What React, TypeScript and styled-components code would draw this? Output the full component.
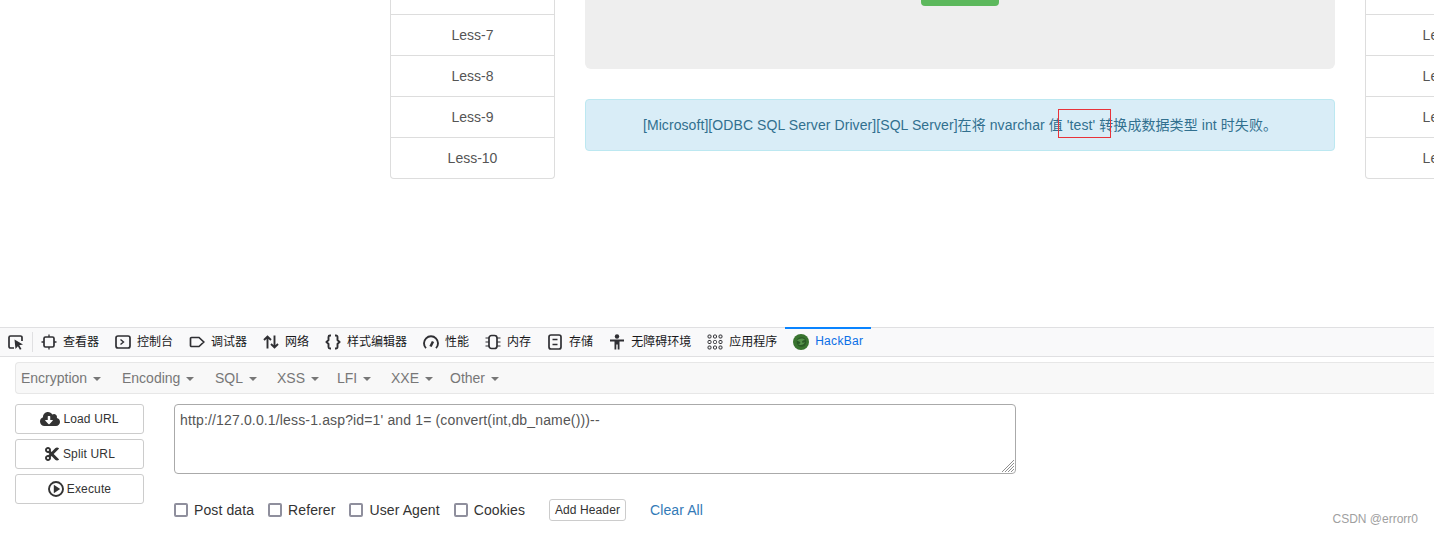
import React from "react";
import styled, { createGlobalStyle } from "styled-components";
import { FaCloudDownloadAlt, FaCut } from "react-icons/fa";

const Global = createGlobalStyle`
  html, body { margin: 0; padding: 0; background: #fff; }
  body { font-family: "Liberation Sans", "Noto Sans CJK SC", sans-serif; overflow: hidden; }
`;

const Page = styled.div`
  width: 1434px;
  height: 533px;
  overflow: hidden;
  position: relative;
  display: flex;
  flex-direction: column;
`;

const Site = styled.div`
  height: 327px;
  padding-left: 390px;
  display: grid;
  grid-template-columns: 165px 750px 165px;
  column-gap: 30px;
  align-items: start;
`;

const LessList = styled.ul`
  list-style: none;
  margin: 0;
  padding: 0;
  border: 1px solid #ddd;
  border-top: 0;
  border-radius: 0 0 4px 4px;
  background: #fff;
`;

const LessItem = styled.li<{ $stub?: boolean }>`
  height: ${(p) => (p.$stub ? "14px" : "40px")};
  border-top: ${(p) => (p.$stub ? "0" : "1px solid #ddd")};
  display: flex;
  align-items: center;
  justify-content: center;
  font-size: 14px;
  color: #555;
`;

const Main = styled.div`
  display: flex;
  flex-direction: column;
  gap: 30px;
`;

const Jumbotron = styled.div`
  height: 69px;
  background: #eee;
  border-radius: 0 0 6px 6px;
  display: flex;
  justify-content: center;
`;

const GreenButton = styled.div`
  width: 78px;
  height: 6px;
  background: #5cb85c;
  border-radius: 0 0 4px 4px;
`;

const Alert = styled.div`
  position: relative;
  height: 52px;
  box-sizing: border-box;
  border: 1px solid #bce8f1;
  border-radius: 4px;
  background: #d9edf7;
  color: #31708f;
  font-size: 14px;
  letter-spacing: 0.08px;
  padding-bottom: 2px;
  display: flex;
  align-items: center;
  justify-content: center;
  white-space: pre;
`;

const RedBox = styled.div`
  position: absolute;
  left: 472px;
  top: 9px;
  width: 53px;
  height: 29px;
  box-sizing: border-box;
  border: 1px solid #e8333a;
`;

const Toolbar = styled.div`
  height: 28px;
  border-top: 1px solid #e0e0e2;
  border-bottom: 1px solid #e0e0e2;
  background: #f9f9fa;
  display: flex;
  align-items: stretch;
`;

const PickerCell = styled.div`
  width: 33px;
  box-sizing: border-box;
  padding-left: 8px;
  display: flex;
  align-items: center;
  border-right: 1px solid #e0e0e2;
  margin: 4px 0;
`;

const Tab = styled.div<{ $active?: boolean }>`
  display: flex;
  align-items: center;
  gap: 6px;
  padding: 0 8px 1px;
  font-size: 12px;
  color: ${(p) => (p.$active ? "#0b6fe6" : "#18181a")};
  margin-top: ${(p) => (p.$active ? "-1px" : "0")};
  border-top: ${(p) => (p.$active ? "2px solid #0a84ff" : "0")};
  white-space: nowrap;
`;

const TabLabel = styled.span<{ $latin?: boolean }>`
  font-family: ${(p) => (p.$latin ? '"Liberation Sans", sans-serif' : '"Noto Sans CJK SC", sans-serif')};
  letter-spacing: ${(p) => (p.$latin ? "0.3px" : "0")};
  position: relative;
  top: -1px;
`;

const Glyph = styled.svg`
  width: 16px;
  height: 16px;
  flex: none;
  fill: none;
  stroke: #2f2f33;
  stroke-width: 1.7;
`;

const HackBar = styled.div`
  padding: 5px 0 0 15px;
  display: flex;
  flex-direction: column;
  gap: 10px;
`;

const MenuBar = styled.nav`
  height: 32px;
  box-sizing: border-box;
  background: #f8f8f8;
  border: 1px solid #e7e7e7;
  border-right: 0;
  border-radius: 4px 0 0 4px;
  display: flex;
  align-items: center;
  padding-left: 5px;
`;

const MenuItem = styled.span<{ $width: number }>`
  width: ${(p) => p.$width}px;
  flex: none;
  font-size: 14px;
  color: #777;
  display: flex;
  align-items: center;
  gap: 6px;
`;

const Caret = styled.i`
  width: 0;
  height: 0;
  border-top: 4px solid #777;
  border-left: 4px solid transparent;
  border-right: 4px solid transparent;
  margin-top: 2px;
`;

const Body = styled.div`
  display: grid;
  grid-template-columns: 129px 842px;
  column-gap: 30px;
  align-items: start;
`;

const SideButtons = styled.div`
  display: flex;
  flex-direction: column;
  gap: 5px;
`;

const SideButton = styled.button`
  height: 30px;
  padding: 0;
  background: #fff;
  border: 1px solid #ccc;
  border-radius: 3px;
  color: #333;
  font: 12px "Liberation Sans", sans-serif;
  letter-spacing: 0.15px;
  display: flex;
  align-items: center;
  justify-content: center;
  gap: 3px;
  svg { flex: none; color: #333; }
`;

const Editor = styled.div`
  display: flex;
  flex-direction: column;
  gap: 25px;
`;

const UrlWrap = styled.div`
  position: relative;
  height: 70px;
`;

const UrlField = styled.textarea`
  display: block;
  width: 100%;
  height: 100%;
  box-sizing: border-box;
  margin: 0;
  padding: 7px 5px;
  border: 1px solid #aaa;
  border-radius: 4px;
  resize: none;
  outline: 0;
  color: #555;
  background: #fff;
  font: 14px/1.15 "Liberation Sans", sans-serif;
  letter-spacing: 0.15px;
`;

const Grip = styled.svg`
  position: absolute;
  right: 1px;
  bottom: 1px;
  width: 15px;
  height: 15px;
  stroke: #8f8f8f;
  stroke-width: 1;
  fill: none;
`;

const Options = styled.div`
  height: 22px;
  display: flex;
  align-items: center;
`;

const Check = styled.label`
  display: flex;
  align-items: center;
  gap: 6px;
  margin-right: 14px;
  font-size: 14px;
  letter-spacing: 0.1px;
  color: #333;
`;

const Box = styled.span`
  width: 14px;
  height: 14px;
  box-sizing: border-box;
  border: 2px solid #8f8f9d;
  border-radius: 2px;
  background: #fff;
`;

const AddHeader = styled.button`
  width: 77px;
  height: 22px;
  padding: 0;
  margin-left: 10px;
  background: #fff;
  border: 1px solid #ccc;
  border-radius: 3px;
  color: #333;
  font: 12px "Liberation Sans", sans-serif;
  letter-spacing: 0.1px;
`;

const ClearAll = styled.a`
  margin-left: 24px;
  font-size: 14px;
  letter-spacing: 0.1px;
  color: #337ab7;
`;

const Watermark = styled.div`
  position: absolute;
  right: 16px;
  top: 512px;
  font-size: 12px;
  line-height: 14px;
  color: #a0a0a0;
`;

const List = ({ items }: { items: string[] }) => (
  <LessList>
    <LessItem $stub />
    {items.map((l) => (
      <LessItem key={l}>{l}</LessItem>
    ))}
  </LessList>
);

const tabs: { label: string; icon: React.ReactNode }[] = [
  {
    label: "查看器",
    icon: (
      <>
        <rect x="3" y="3" width="10" height="10" rx="1.5" />
        <path d="M8 0.5V3M8 13v2.5M0.5 8H3M13 8h2.5" strokeWidth="1.3" />
      </>
    ),
  },
  {
    label: "控制台",
    icon: (
      <>
        <rect x="1" y="2" width="14" height="12" rx="2" />
        <path d="M5.5 5.5 8.5 8l-3 2.5" strokeWidth="1.4" />
      </>
    ),
  },
  {
    label: "调试器",
    icon: <path d="M2.5 3.5h7.5L14.8 8 10 12.5H2.5a1 1 0 0 1-1-1v-7a1 1 0 0 1 1-1z" />,
  },
  {
    label: "网络",
    icon: <path d="M4.5 14.5V2.5M1 6l3.500-3.500L8 6M11.500 1.500v12M8 10l3.500 3.500L15 10" strokeWidth="1.9" />,
  },
  {
    label: "样式编辑器",
    icon: (
      <path
        d="M6 1.500H5a1.500 1.500 0 0 0-1.500 1.500v3L1.500 8l2 2v3A1.500 1.500 0 0 0 5 14.500h1M10 1.500h1A1.500 1.500 0 0 1 12.500 3v3l2 2-2 2v3a1.500 1.500 0 0 1-1.500 1.500h-1"
        strokeWidth="1.9"
      />
    ),
  },
  {
    label: "性能",
    icon: (
      <>
        <path d="M3 14.200A7 7 0 1 1 13 14.200" strokeWidth="1.900" />
        <path d="M7.500 12.500 10 7.500" strokeWidth="2.500" />
      </>
    ),
  },
  {
    label: "内存",
    icon: (
      <>
        <rect x="4" y="1.500" width="8" height="13" rx="2.500" />
        <path d="M0.500 4H4M0.500 8H4M0.500 12H4M12 4h3.500M12 8h3.500M12 12h3.500" strokeWidth="1.100" />
      </>
    ),
  },
  {
    label: "存储",
    icon: (
      <>
        <rect x="2" y="1" width="12" height="14" rx="2" />
        <path d="M5.500 5.500h5M5.500 10.500h5" />
      </>
    ),
  },
  {
    label: "无障碍环境",
    icon: (
      <>
        <circle cx="8" cy="2.500" r="2.200" fill="#2f2f33" stroke="none" />
        <path d="M1 5.500h14v2h-4.500V15.500H8.700v-5H7.300v5H5.500V7.500H1z" fill="#2f2f33" stroke="none" />
      </>
    ),
  },
  {
    label: "应用程序",
    icon: (
      <g strokeWidth="1">
        {[2.5, 8, 13.5].flatMap((y) =>
          [2.5, 8, 13.5].map((x) => <rect key={`${x}-${y}`} x={x - 1.5} y={y - 1.5} width="3" height="3" rx="1" />)
        )}
      </g>
    ),
  },
];

const menus: [string, number][] = [
  ["Encryption", 101],
  ["Encoding", 93],
  ["SQL", 62],
  ["XSS", 60],
  ["LFI", 54],
  ["XXE", 59],
  ["Other", 60],
];
const checks = ["Post data", "Referer", "User Agent", "Cookies"];

export default function App() {
  return (
    <Page>
      <Global />
      <Site>
        <List items={["Less-7", "Less-8", "Less-9", "Less-10"]} />
        <Main>
          <Jumbotron>
            <GreenButton />
          </Jumbotron>
          <Alert>
            [Microsoft][ODBC SQL Server Driver][SQL Server]在将 nvarchar 值 'test' 转换成数据类型 int 时失败。
            <RedBox />
          </Alert>
        </Main>
        <List items={["Less-17", "Less-18", "Less-19", "Less-20"]} />
      </Site>

      <Toolbar>
        <PickerCell>
          <Glyph viewBox="0 0 16 16">
            <path d="M6 14H2.500A1.500 1.500 0 0 1 1 12.500v-9A1.500 1.500 0 0 1 2.500 2h10A1.500 1.500 0 0 1 14 3.500V7" />
            <path d="M6.500 5.500 15 10.500l-3.700.8L13.500 15l-1.600.8-2-3.600L7.500 15z" fill="#2f2f33" stroke="none" />
          </Glyph>
        </PickerCell>
        {tabs.map((t) => (
          <Tab key={t.label}>
            <Glyph viewBox="0 0 16 16">{t.icon}</Glyph>
            <TabLabel>{t.label}</TabLabel>
          </Tab>
        ))}
        <Tab $active>
          <svg width="16" height="16" viewBox="0 0 16 16">
            <circle cx="8" cy="8" r="8" fill="#39742f" />
            <circle cx="8.500" cy="8" r="4.800" fill="#2a5a26" />
            <path d="M4 7c2-3 6-3 8-1-2 0-3 1-3 2s2 1 3 0c-1 3-5 4-7 2 2 0 3-1 2-2S5 7 4 7z" fill="#55924a" />
          </svg>
          <TabLabel $latin>HackBar</TabLabel>
        </Tab>
      </Toolbar>

      <HackBar>
        <MenuBar>
          {menus.map(([m, w]) => (
            <MenuItem key={m} $width={w}>
              {m}
              <Caret />
            </MenuItem>
          ))}
        </MenuBar>
        <Body>
          <SideButtons>
            <SideButton>
              <FaCloudDownloadAlt size={20} />
              Load URL
            </SideButton>
            <SideButton>
              <FaCut size={16} />
              Split URL
            </SideButton>
            <SideButton>
              <svg width="16" height="16" viewBox="0 0 16 16">
                <circle cx="8" cy="8" r="7" fill="none" stroke="#333" strokeWidth="1.900" />
                <path d="M5.800 3.800 12.200 8l-6.400 4.200z" fill="#333" />
              </svg>
              Execute
            </SideButton>
          </SideButtons>
          <Editor>
            <UrlWrap>
              <UrlField readOnly value="http://127.0.0.1/less-1.asp?id=1' and 1= (convert(int,db_name()))--" />
              <Grip viewBox="0 0 15 15">
                <path d="M2 14 14 2M5 14 14 5M8 14l6-6M11 14l3-3" />
              </Grip>
            </UrlWrap>
            <Options>
              {checks.map((c) => (
                <Check key={c}>
                  <Box />
                  {c}
                </Check>
              ))}
              <AddHeader>Add Header</AddHeader>
              <ClearAll>Clear All</ClearAll>
            </Options>
          </Editor>
        </Body>
      </HackBar>
      <Watermark>CSDN @errorr0</Watermark>
    </Page>
  );
}
